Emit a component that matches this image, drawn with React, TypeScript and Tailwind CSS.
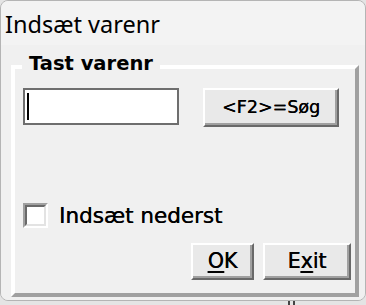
import React from 'react';

const dejavu = "font-['DejaVu_Sans',sans-serif]";

const btnClass =
  'flex items-center justify-center border-2 border-t-white border-l-white border-r-[#696969] border-b-[#696969] bg-[#e9e9e9] shadow-[inset_-2px_-2px_0_#a0a0a0] text-black leading-none [text-shadow:0.35px_0_0_#000]';

const Checkbox = () => (
  <div className="w-[25px] h-[25px] border-2 border-t-[#a0a0a0] border-l-[#a0a0a0] border-r-white border-b-white">
    <div className="w-full h-full border-2 border-t-[#696969] border-l-[#696969] border-r-[#e3e3e3] border-b-[#e3e3e3] bg-white" />
  </div>
);

export default function App() {
  return (
    <div className="w-[366px] h-[305px] bg-[#e4e4e4] overflow-hidden">
      <div className="w-[366px] h-[301px] rounded-[8px] border border-[#b4b4b4] overflow-hidden flex flex-col">
        <div className="h-[44px] bg-[#f3f3f3] pl-[4px] pt-[12px]">
          <span className="font-['Noto_Sans',sans-serif] text-[23.5px] leading-none text-black">
            Indsæt varenr
          </span>
        </div>
        <div className={`flex-1 bg-[#f0f0f0] pt-[20px] pl-[10px] pr-[6px] ${dejavu}`}>
          <div className="relative h-[232px] border-4 border-t-white border-l-white border-r-[#a0a0a0] border-b-[#a0a0a0] pt-[19px] pl-[8px] pr-[4px] flex flex-col">
            <span className="absolute left-[7px] top-[-15px] bg-[#f0f0f0] px-[7px] text-[19.5px] font-bold leading-none text-black">
              Tast varenr
            </span>

            <div className="flex items-start gap-[24px]">
              <div className="w-[156px] h-[37px] border-2 border-[#6e6e6e] bg-white pl-[2px] pt-[3px]">
                <div className="w-[2px] h-[27px] bg-black" />
              </div>
              <button className={`${btnClass} w-[136px] h-[39px] text-[17.5px]`}>
                &lt;F2&gt;=Søg
              </button>
            </div>

            <label className="mt-[76px] flex items-center gap-[11px]">
              <Checkbox />
              <span className="text-[21.5px] leading-none text-black [text-shadow:0.35px_0_0_#000]">
                Indsæt nederst
              </span>
            </label>

            <div className="mt-[15px] flex justify-end gap-[9px]">
              <button className={`${btnClass} w-[63px] h-[37px] text-[20.5px]`}>
                <span className="underline decoration-2 underline-offset-[3px]">O</span>K
              </button>
              <button className={`${btnClass} w-[88px] h-[37px] text-[20.5px]`}>
                E<span className="underline decoration-2 underline-offset-[3px]">x</span>it
              </button>
            </div>
          </div>
        </div>
      </div>
      <div className="h-[4px] pl-[288px] flex gap-[3px]">
        <div className="w-[2px] h-full bg-[#444]" />
        <div className="w-[2px] h-full bg-[#444]" />
      </div>
    </div>
  );
}
